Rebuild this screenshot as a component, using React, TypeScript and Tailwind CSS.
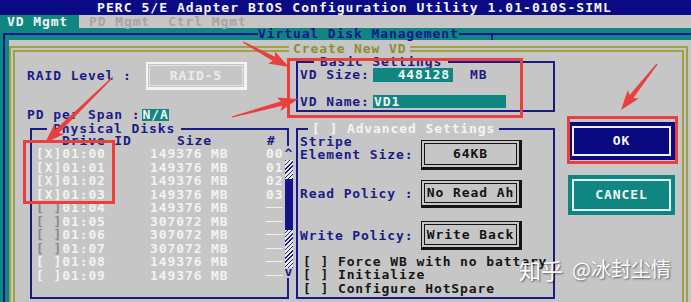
import React from "react";

type Pt = [number, number];

function arrowPoints(t: Pt, p: Pt): string {
  const dx = p[0] - t[0];
  const dy = p[1] - t[1];
  const len = Math.hypot(dx, dy);
  const ux = dx / len;
  const uy = dy / len;
  const nx = -uy;
  const ny = ux;
  const L = 17;
  const W = 7;
  const w0 = 0.6;
  const w1 = 2.4;
  const bx = p[0] - ux * L;
  const by = p[1] - uy * L;
  const pts: Pt[] = [
    [t[0] + nx * w0, t[1] + ny * w0],
    [bx + nx * w1, by + ny * w1],
    [bx + nx * W - ux * 3, by + ny * W - uy * 3],
    p,
    [bx - nx * W - ux * 3, by - ny * W - uy * 3],
    [bx - nx * w1, by - ny * w1],
    [t[0] - nx * w0, t[1] - ny * w0],
  ];
  return pts.map((q) => `${q[0].toFixed(1)},${q[1].toFixed(1)}`).join(" ");
}

const disks = [
  { c: "X", id: "01:00", size: "149376", n: "00", dim: false },
  { c: "X", id: "01:01", size: "149376", n: "01", dim: false },
  { c: "X", id: "01:02", size: "149376", n: "02", dim: false },
  { c: "X", id: "01:03", size: "149376", n: "03", dim: false },
  { c: " ", id: "01:04", size: "149376", n: "──", dim: true },
  { c: " ", id: "01:05", size: "307072", n: "──", dim: true },
  { c: " ", id: "01:06", size: "307072", n: "──", dim: true },
  { c: " ", id: "01:07", size: "307072", n: "──", dim: true },
  { c: " ", id: "01:08", size: "149376", n: "──", dim: false },
  { c: " ", id: "01:09", size: "149376", n: "──", dim: false },
];

function Box({ h, children }: { h: string; children: React.ReactNode }) {
  return (
    <div className={`w-[101px] ${h} border border-[#141414] border-r-[3px] border-b-[3px] p-[2px]`}>
      <div className="h-full border border-[#141414] flex items-center justify-center text-[#141414] whitespace-pre">
        {children}
      </div>
    </div>
  );
}

export default function App() {
  return (
    <div className="relative w-[691px] h-[302px] overflow-hidden bg-[#c6c6c6] font-['DejaVu_Sans_Mono',monospace] font-bold text-[13px] tracking-[0.9px]">
      {/* title bar */}
      <div className="h-[15px] bg-[#0a0a84] text-[#f6f6f6] leading-[15px] pl-[97px] tracking-[1.05px] whitespace-pre">
        PERC 5/E Adapter BIOS Configuration Utility 1.01-010S-SIML
      </div>

      {/* tab row */}
      <div className="h-[13px] flex leading-[13px] whitespace-pre">
        <div className="w-[79px] bg-[#0f8682] text-[#f4f4f4] pl-[7px]">VD Mgmt</div>
        <div className="ml-[10px] text-[#a4a4a4]">PD Mgmt</div>
        <div className="ml-[18px] text-[#a4a4a4]">Ctrl Mgmt</div>
      </div>

      {/* teal window */}
      <div className="bg-[#0f8682] pl-[3px]">
        <fieldset className="border-t-2 border-l-2 border-r-0 border-b-0 border-[#16168a] pl-[4px] pt-[1px]">
          <legend className="ml-[249px] leading-[11px] text-[#16168a] whitespace-pre">Virtual Disk Management</legend>

          <div className="bg-[#c6c6c6] pr-[3px] pt-[2px]">
            {/* Create New VD dialog */}
            <fieldset className="border-[6px] border-double border-[#a0a040] pb-[20px]">
              <legend className="ml-[274px] px-[4px] leading-[13px] text-[#8e8e2c] whitespace-pre">Create New VD</legend>

              <div className="flex">
                {/* left column */}
                <div className="w-[278px] flex flex-col">
                  <div className="mt-[7px] h-[28px] flex items-center pl-[12px]">
                    <span className="w-[119px] text-[#1b1b88] whitespace-pre">RAID Level :</span>
                    <div className="w-[101px] h-[28px] border-2 border-[#f4f4f4] border-r-[3px] border-b-[3px] p-[1px]">
                      <div className="h-full border border-[#e2e2e2] flex items-center justify-center text-[#ececec]">
                        RAID-5
                      </div>
                    </div>
                  </div>

                  <div className="mt-[19px] h-[12px] leading-[12px] pl-[12px] flex whitespace-pre">
                    <span className="text-[#1b1b88]">PD per Span :</span>
                    <span className="ml-[2px] bg-[#0f8682] text-[#f4f4f4]">N/A</span>
                  </div>

                  <fieldset className="mt-[1px] ml-[15px] w-[259px] border-2 border-[#1b1b88] pb-[15px]">
                    <legend className="ml-[15px] px-[6px] leading-[13px] text-[#1b1b88] whitespace-pre">Physical Disks</legend>
                    <div className="relative">
                      <div className="flex leading-[12px] text-[#1b1b88] whitespace-pre pl-[4px]">
                        <span className="w-[114px] pl-[26px]">Drive ID</span>
                        <span className="w-[116px] pl-[27px]">Size</span>
                        <span className="pl-[1px]">#</span>
                      </div>
                      <div className="flex flex-col leading-[13.5px] text-[#f2f2f2] whitespace-pre pl-[4px]">
                        {disks.map((d) => (
                          <div key={d.id} className="flex">
                            <span className="w-[114px]">
                              <span className={d.dim ? "text-[#8a8a8a]" : "text-[#f2f2f2]"}>[</span>
                              {d.c}
                              <span className={d.dim ? "text-[#8a8a8a]" : "text-[#f2f2f2]"}>]</span>
                              {d.id}
                            </span>
                            <span className="w-[116px]">{d.size} MB</span>
                            <span>{d.n}</span>
                          </div>
                        ))}
                      </div>
                      {/* scrollbar over the right border */}
                      <div className="absolute top-[11px] right-[-6px] w-[9px] h-[132px] bg-[#c6c6c6] flex flex-col items-center text-[#1b1b88]">
                        <div className="h-[12px] leading-[15px] tracking-normal">^</div>
                        <div className="mt-[2px] w-[8px] h-[19px] bg-[repeating-linear-gradient(-45deg,#1b1b88_0px,#1b1b88_1px,#ececec_1px,#ececec_3px)]" />
                        <div className="w-[8px] h-[51px] bg-[#14148a]" />
                        <div className="w-[8px] h-[38px] bg-[repeating-linear-gradient(-45deg,#1b1b88_0px,#1b1b88_1px,#ececec_1px,#ececec_3px)]" />
                        <div className="h-[10px] leading-[8px] tracking-normal">v</div>
                      </div>
                    </div>
                  </fieldset>
                </div>

                {/* middle column */}
                <div className="ml-[3px] w-[259px] flex flex-col">
                  <fieldset className="border-2 border-[#1b1b88] pb-[2px]">
                    <legend className="ml-[16px] px-[6px] leading-[13px] text-[#1b1b88] whitespace-pre">Basic Settings</legend>
                    <div className="h-[14px] flex items-center pl-[2px] whitespace-pre">
                      <span className="w-[73px] text-[#1b1b88]">VD Size:</span>
                      <span className="w-[80px] h-[14px] leading-[14px] bg-[#0f8682] text-[#f4f4f4] text-right pr-[3px]">448128</span>
                      <span className="ml-[17px] text-[#1b1b88]">MB</span>
                    </div>
                    <div className="mt-[13px] h-[13px] flex items-center pl-[2px] whitespace-pre">
                      <span className="w-[73px] text-[#1b1b88]">VD Name:</span>
                      <span className="w-[133px] h-[13px] leading-[13px] bg-[#0f8682] text-[#f4f4f4] pl-[1px]">VD1</span>
                    </div>
                  </fieldset>

                  <fieldset className="mt-[10px] border-2 border-[#1b1b88] pb-[2px]">
                    <legend className="ml-[10px] px-[4px] leading-[13px] text-[#f4f4f4] whitespace-pre">[ ] Advanced Settings</legend>
                    <div className="mt-[1px] flex items-start pl-[2px]">
                      <div className="w-[121px] leading-[12.5px] text-[#1b1b88] whitespace-pre">
                        <div>Stripe</div>
                        <div>Element Size:</div>
                      </div>
                      <div className="mt-[4px]">
                        <Box h="h-[30px]">64KB</Box>
                      </div>
                    </div>
                    <div className="mt-[10px] flex items-center pl-[2px]">
                      <div className="w-[121px] text-[#1b1b88] whitespace-pre">Read Policy :</div>
                      <Box h="h-[28px]">No Read Ah</Box>
                    </div>
                    <div className="mt-[13px] flex items-center pl-[2px]">
                      <div className="w-[121px] text-[#1b1b88] whitespace-pre">Write Policy:</div>
                      <Box h="h-[29px]">Write Back</Box>
                    </div>
                    <div className="mt-[5px] pl-[5px] leading-[13.3px] text-[#161616] whitespace-pre">
                      <div>[ ] Force WB with no battery</div>
                      <div>[ ] Initialize</div>
                      <div>[ ] Configure HotSpare</div>
                    </div>
                  </fieldset>
                </div>

                {/* buttons */}
                <div className="ml-[13px] w-[107px] flex flex-col">
                  <div className="mt-[67px] h-[38px] bg-[#0a0a80] p-[4px]">
                    <div className="h-full border-2 border-[#f0f0f0] flex items-center justify-center text-[#f6f6f6]">OK</div>
                  </div>
                  <div className="mt-[15px] h-[40px] bg-[#0f8682] p-[4px]">
                    <div className="h-full border-2 border-[#e2f4f2] flex items-center justify-center text-[#f6f6f6]">CANCEL</div>
                  </div>
                </div>
              </div>
            </fieldset>
          </div>
        </fieldset>
      </div>

      {/* window title junction tick */}
      <div className="absolute left-[491px] top-[34px] w-[2px] h-[6px] bg-[#16168a]" />

      {/* red annotation boxes */}
      <div className="absolute left-[287px] top-[58px] w-[236px] h-[60px] border-[3px] border-[#ea3f3f]" />
      <div className="absolute left-[23px] top-[140px] w-[92px] h-[64px] border-[3px] border-[#ea3f3f]" />
      <div className="absolute left-[567px] top-[116px] w-[111px] h-[48px] border-[3px] border-[#ea3f3f]" />

      {/* red arrows */}
      <svg className="absolute left-0 top-0" width="691" height="302" viewBox="0 0 691 302">
        <polygon points={arrowPoints([243, 42], [289, 67])} fill="#ea3f3f" />
        <polygon points={arrowPoints([113, 77], [45, 143])} fill="#ea3f3f" />
        <polygon points={arrowPoints([232, 117], [298, 99])} fill="#ea3f3f" />
        <polygon points={arrowPoints([657, 64], [621, 110])} fill="#ea3f3f" />
      </svg>

      {/* watermark */}
      <div className="absolute left-[519px] top-[255px] flex items-center font-['Noto_Sans_CJK_SC',sans-serif] font-normal tracking-normal text-white [text-shadow:1px_1px_2px_rgba(0,0,0,0.55)]">
        <span className="text-[22px] leading-[28px]">知乎</span>
        <span className="ml-[9px] text-[20px] leading-[28px]">@冰封尘情</span>
      </div>
    </div>
  );
}
